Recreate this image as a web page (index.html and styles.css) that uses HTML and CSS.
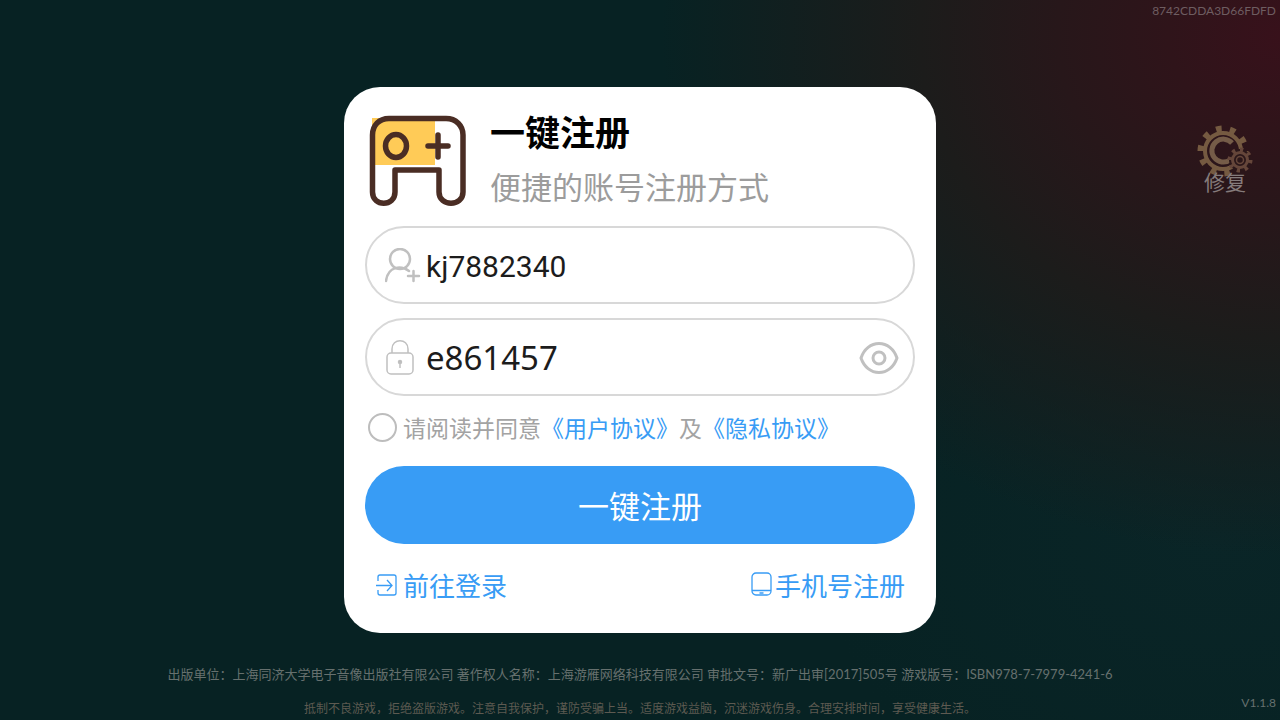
FILE: index.html
```html
<!DOCTYPE html>
<html lang="zh-CN">
<head>
  <meta charset="UTF-8">
  <meta name="viewport" content="width=device-width, initial-scale=1.0">
  <title>一键注册</title>
  <link rel="stylesheet" href="styles.css">
</head>
<body>
  <header class="top-bar">8742CDDA3D66FDFD</header>

  <main class="stage">
    <form class="card">
      <div class="card-header">
        <svg class="logo" viewBox="0 0 98 98" aria-hidden="true">
          <path d="M3 3h63v47H6V14H3z" fill="#ffcb57"/>
          <g fill="none" stroke="#4a2d24" stroke-width="5.500" stroke-linecap="round" stroke-linejoin="round">
            <path d="M20 3.500H77C87 3.500 94 10.500 94 20V77C94 92 70 92 70 77V55H26V77C26 92 3.500 92 3.500 77V20C3.500 10.500 10 3.500 20 3.500Z"/>
            <ellipse cx="27" cy="31" rx="10.500" ry="11.500"/>
            <path d="M59 31h20M69 20v22"/>
          </g>
        </svg>
        <div>
          <h1 class="card-title">一键注册</h1>
          <p class="card-subtitle">便捷的账号注册方式</p>
        </div>
      </div>

      <div class="fields">
        <div class="field">
          <label for="account" aria-label="账号">
            <svg class="field-icon" viewBox="0 0 36 36" fill="none" stroke="#c0c0c0" stroke-width="2.500" stroke-linecap="round" aria-hidden="true">
              <circle cx="15" cy="11" r="10"/>
              <path d="M1 33C3 18 16 17 24 23M23 28h11M28.500 23v10"/>
            </svg>
          </label>
          <input type="text" id="account" class="account-input" value="kj7882340">
        </div>
        <div class="field">
          <label for="password" aria-label="密码">
            <svg class="field-icon" viewBox="0 0 36 36" fill="none" stroke="#c0c0c0" stroke-width="1.500" aria-hidden="true">
              <path d="M7 13V9C7 -2 23 -2 23 9V13"/>
              <rect x="2" y="13" width="26" height="21" rx="4"/>
              <circle cx="15" cy="22" r="1.500" fill="#b5b5b5"/>
              <path d="M15 22v6"/>
            </svg>
          </label>
          <input type="text" id="password" class="password-input" value="e861457">
          <button type="button" class="eye-button" aria-label="显示密码">
            <svg viewBox="0 0 40 34" fill="none" stroke="#c0c0c0" stroke-width="3" aria-hidden="true">
              <path d="M2 17C5 8 12 2.500 20 2.500S35 8 38 17C35 26 28 31.500 20 31.500S5 26 2 17Z" stroke-linejoin="round"/>
              <circle cx="20" cy="17" r="6"/>
            </svg>
          </button>
        </div>
      </div>

      <div class="agreement">
        <input type="checkbox" id="agree">
        <p><label for="agree">请阅读并同意</label><a href="#">《用户协议》</a>及<a href="#">《隐私协议》</a></p>
      </div>

      <button type="submit" class="submit-button">一键注册</button>

      <nav class="card-links">
        <a href="#" class="link-login">
          <svg viewBox="0 0 24 24" fill="none" stroke="#389cf5" stroke-width="1.300" aria-hidden="true">
            <path d="M3 9V5Q3 3 5 3H19Q21 3 21 5V21Q21 23 19 23H5Q3 23 3 21V18M1 13.500H17M12 8l5 5.500L12 19"/>
          </svg>
          前往登录
        </a>
        <a href="#">
          <svg viewBox="0 0 24 24" fill="none" stroke="#389cf5" stroke-width="1.300" aria-hidden="true">
            <rect x="1" y="1" width="19" height="22" rx="4"/>
            <path d="M1 18.500H20M8.500 21h4"/>
          </svg>
          手机号注册
        </a>
      </nav>
    </form>

    <button type="button" class="repair-button">
      <svg viewBox="0 0 58 54" fill="none" aria-hidden="true">
        <g stroke="#755a41">
          <circle cx="27" cy="26" r="18" stroke-width="4"/>
          <circle cx="27" cy="26" r="22" stroke-width="7" pathLength="100" stroke-dasharray="4 6"/>
        </g>
        <path d="M36 18A11.500 11.500 0 1 0 34 35" stroke="#755c48" stroke-width="5"/>
        <circle cx="44" cy="35" r="11" fill="#2b1719"/>
        <g stroke="#65463a">
          <circle cx="44" cy="35" r="7.500" stroke-width="3"/>
          <circle cx="44" cy="35" r="10" stroke-width="5" pathLength="80" stroke-dasharray="4 6"/>
          <circle cx="44" cy="35" r="3.500" stroke-width="1.500"/>
        </g>
      </svg>
      修复
    </button>
  </main>

  <footer class="bottom-bar">
    <div class="notices">
      <p class="publisher">出版单位：上海同济大学电子音像出版社有限公司 著作权人名称：上海游雁网络科技有限公司 审批文号：新广出审[2017]505号 游戏版号：ISBN978-7-7979-4241-6</p>
      <p class="advice">抵制不良游戏，拒绝盗版游戏。注意自我保护，谨防受骗上当。适度游戏益脑，沉迷游戏伤身。合理安排时间，享受健康生活。</p>
    </div>
    <span class="version">V1.1.8</span>
  </footer>
</body>
</html>
```

FILE: styles.css
```css
* {
  box-sizing: border-box;
  margin: 0;
  padding: 0;
}

body {
  min-height: 100vh;
  display: grid;
  grid-template-rows: 87px 1fr 87px;
  background:
    radial-gradient(ellipse 620px 520px at 100% 5%, #38111b 0%, #2f141a 18%, #27171a 36%, #1c1c1b 58%, rgba(7, 34, 35, 0) 100%),
    radial-gradient(ellipse 400px 300px at 95% 75%, #0a2527, rgba(7, 34, 35, 0)),
    #072223;
  font-family: Lato, 'Noto Sans CJK SC', sans-serif;
  color: #66706e;
}

a {
  color: #389cf5;
  text-decoration: none;
}

button {
  border: none;
  background: none;
  font-family: inherit;
  cursor: pointer;
}

svg {
  display: block;
}

.top-bar {
  padding: 3px 4px;
  text-align: right;
  font-size: 12px;
  line-height: 16px;
  color: #6e5d61;
}

.stage {
  display: grid;
  grid-template-columns: 1fr minmax(0, 592px) 1fr;
  align-items: center;
}

/* card */
.card {
  grid-column: 2;
  padding: 16px 21px 9px;
  border-radius: 36px;
  background: #fff;
  font-family: 'Noto Sans CJK SC', sans-serif;
}

.card-header {
  display: flex;
  align-items: flex-end;
  gap: 23px;
  padding: 0 4px;
  margin-bottom: 13px;
}

.logo {
  width: 98px;
  height: 98px;
}

.card-title {
  font-size: 35px;
  line-height: 56px;
  font-weight: 700;
  color: #000;
}

.card-subtitle {
  font-size: 31px;
  line-height: 54px;
  color: #9c9c9c;
}

.fields {
  display: grid;
  grid-template-columns: minmax(0, 1fr);
  gap: 14px;
}

.field {
  display: flex;
  align-items: center;
  gap: 5px;
  height: 78px;
  padding: 2px 14px 0 18px;
  border: 2px solid #d8d8d8;
  border-radius: 39px;
}

.field-icon {
  width: 36px;
  height: 36px;
}

.field input {
  flex: 1;
  min-width: 0;
  border: none;
  outline: none;
  background: none;
  color: #1c1c1c;
}

.field .account-input {
  font-family: Roboto, sans-serif;
  font-size: 30px;
}

.field .password-input {
  font-family: 'Noto Sans', sans-serif;
  font-size: 33px;
  line-height: 44px;
}

.eye-button {
  width: 40px;
  height: 34px;
}

.agreement {
  display: flex;
  align-items: center;
  gap: 6px;
  height: 62px;
  margin-bottom: 8px;
  padding-left: 3px;
  font-size: 23px;
  color: #a3a3a3;
}

.agreement input {
  appearance: none;
  width: 29px;
  height: 29px;
  border: 2px solid #bdbdbd;
  border-radius: 50%;
}

.agreement input:checked {
  background: #389cf5;
  border-color: #389cf5;
}

.submit-button {
  display: block;
  width: 100%;
  height: 78px;
  padding-bottom: 2px;
  border-radius: 39px;
  background: #389cf5;
  font-size: 31px;
  color: #fff;
}

.card-links {
  display: flex;
  justify-content: space-between;
  align-items: center;
  height: 80px;
  padding: 0 10px;
  font-size: 26px;
}

.card-links a {
  display: flex;
  align-items: center;
}

.card-links .link-login {
  gap: 4px;
}

.card-links svg {
  width: 24px;
  height: 24px;
}

/* repair */
.repair-button {
  align-self: start;
  justify-self: end;
  margin: 38px 26px 0 0;
  font-size: 21px;
  line-height: 16px;
  color: #857b7b;
}

.repair-button svg {
  width: 58px;
  height: 54px;
  margin-bottom: -5px;
}

/* footer */
.bottom-bar {
  display: grid;
  grid-template-columns: 1fr auto 1fr;
}

.notices {
  grid-column: 2;
  padding-top: 31px;
  text-align: center;
}

.publisher {
  font-size: 13px;
  line-height: 20px;
}

.advice {
  margin-top: 15px;
  font-size: 12px;
  line-height: 20px;
  color: #5d5a51;
}

.version {
  align-self: end;
  justify-self: end;
  padding: 0 4px 9px;
  font-size: 12px;
  line-height: 16px;
}
```
